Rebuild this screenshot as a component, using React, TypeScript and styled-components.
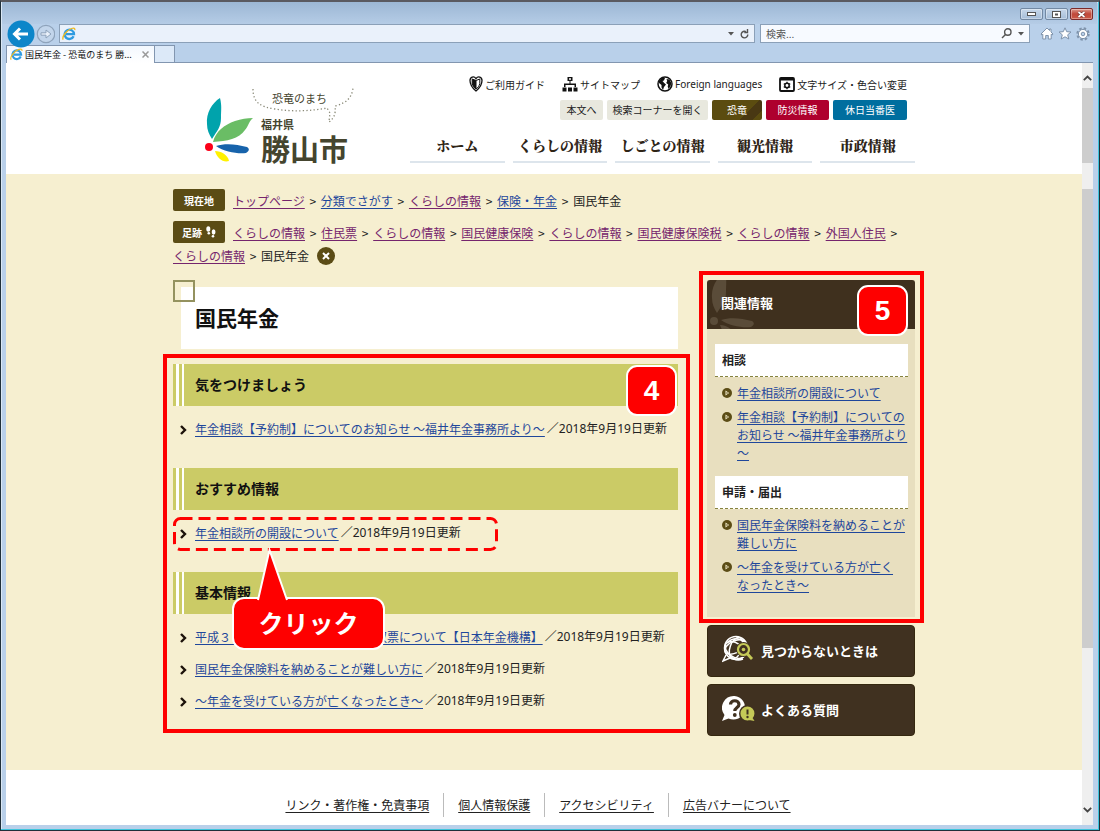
import React from 'react';
import styled, { createGlobalStyle } from 'styled-components';

const GlobalStyle = createGlobalStyle`
  *, *::before, *::after { box-sizing: border-box; }
  body {
    margin: 0;
    font-family: "Noto Sans CJK JP", "Noto Sans", sans-serif;
    font-size: 12px;
    color: #222;
    line-break: strict;
  }
  h1, h2, h3, ul, p { margin: 0; padding: 0; }
  ul { list-style: none; }
  button, input { font: inherit; }
  svg { display: block; flex: none; }
`;

/* ---------- browser window ---------- */

const Window = styled.div`
  display: flex;
  flex-direction: column;
  min-height: 100vh;
  padding: 0 6px 5px 5px;
  background: #b9d0ea;
  border: 1px solid #20303a;
  border-top: 2px solid #5a5a60;
  box-shadow: inset -1px -1px 0 #3fc4dc, inset 1px 1px 0 #dbe8f5;
`;

const TitleBar = styled.div`
  display: flex;
  justify-content: flex-end;
  gap: 2px;
  height: 22px;
  margin: 0 -4px 0 -4px;
  padding: 6px 4px 0;
  background: linear-gradient(#9cb7d4, #b5cce6);
`;

const WindowButton = styled.button<{ $close?: boolean }>`
  display: grid;
  place-items: center;
  width: 23px;
  height: 12px;
  padding: 0;
  border: 1px solid ${p => (p.$close ? '#7c2a2a' : '#7288a2')};
  border-radius: 2px;
  background: ${p => (p.$close ? 'linear-gradient(#dd9a8e, #c0483a 50%, #cc5a48)' : 'linear-gradient(#c8d8ea, #a5bdd8)')};
  box-shadow: inset 0 0 0 1px rgba(255, 255, 255, 0.35);
`;

const AddressRow = styled.div`
  display: flex;
  align-items: center;
  height: 19px;
  gap: 5px;
  padding-right: 3px;
`;

const NavButtons = styled.div`
  position: relative;
  display: flex;
  flex: none;
  align-items: center;
  width: 48px;
  height: 28px;
`;

const PlainButton = styled.button`
  display: grid;
  place-items: center;
  flex: none;
  padding: 0;
  border: 0;
  background: none;
`;

const Field = styled.label<{ $grow?: boolean }>`
  display: flex;
  align-items: center;
  gap: 6px;
  flex: ${p => (p.$grow ? '1 1 0' : '0 0 270px')};
  min-width: 0;
  height: 19px;
  padding: 0 5px 0 ${p => (p.$grow ? '2px' : '5px')};
  border: 1px solid #8ba0b8;
  background: ${p => (p.$grow ? '#eaf1fb' : '#f7faff')};
`;

const FieldInput = styled.input`
  flex: 1;
  min-width: 0;
  height: 15px;
  padding: 0;
  border: 0;
  outline: 0;
  background: none;
  font-size: 10px;
  color: #333;
  &::placeholder { color: #555; opacity: 1; }
`;

const ToolIcons = styled.div`
  display: flex;
  gap: 4px;
  margin-left: 5px;
`;

const TabRow = styled.div`
  display: flex;
  height: 20px;
  padding-top: 2px;
  border-bottom: 1px solid #8296b0;
`;

const Tab = styled.div`
  display: flex;
  align-items: center;
  gap: 2px;
  width: 149px;
  height: 18px;
  padding: 0 5px 0 3px;
  border: 1px solid #8296b0;
  border-width: 1px 1px 0 1px;
  background: linear-gradient(#f3f8fe, #fff);
  font-size: 9px;
  white-space: nowrap;
  color: #111;
`;

const TabTitle = styled.span`
  flex: 1;
`;

const NewTab = styled.button`
  width: 20px;
  height: 17px;
  padding: 0;
  border: 1px solid #8296b0;
  border-left: 0;
  border-bottom: 0;
  background: #dce9f8;
`;

const Viewport = styled.div`
  display: flex;
  flex: 1;
  background: #fff;
`;

const Page = styled.div`
  display: flex;
  flex-direction: column;
  flex: 1;
  min-width: 0;
`;

const ScrollBar = styled.div`
  display: flex;
  flex-direction: column;
  flex: none;
  width: 11px;
  padding-top: 12px;
  background: #efefef;
  align-items: center;
`;

const Thumb = styled.div<{ $h: number; $gap: number }>`
  width: 11px;
  height: ${p => p.$h}px;
  margin-top: ${p => p.$gap}px;
  background: #cdcdcd;
`;

const ScrollEnd = styled.div`
  margin-top: auto;
  margin-bottom: 12px;
`;

/* ---------- site header ---------- */

const Inner = styled.div`
  width: 100%;
  max-width: 742px;
  margin: 0 auto;
`;

const SiteHeader = styled.header`
  background: #fff;
`;

const HeaderInner = styled(Inner)`
  display: flex;
  justify-content: space-between;
  height: 111px;
`;

const Logo = styled.a`
  position: relative;
  display: flex;
  gap: 7px;
  margin: 24px 0 0 31px;
  color: #45452f;
  text-decoration: none;
`;

const LogoText = styled.div`
  display: flex;
  flex-direction: column;
  align-items: flex-start;
  font-weight: 700;
`;

const Bubble = styled.svg`
  position: absolute;
  left: 48px;
  top: 0;
`;

const LogoCatch = styled.span`
  height: 26px;
  margin: 3px 0 0 11px;
  font-size: 11px;
  line-height: 16px;
  font-weight: 400;
`;

const LogoPref = styled.span`
  font-size: 11px;
  line-height: 16px;
`;

const LogoCity = styled.span`
  font-size: 29px;
  line-height: 32px;
`;

const HeaderRight = styled.div`
  display: flex;
  flex-direction: column;
  width: 505px;
  padding-top: 13px;
`;

const QuickLinks = styled.ul`
  display: flex;
  justify-content: flex-end;
  gap: 17px;
  padding-right: 8px;
`;

const QuickLink = styled.a`
  display: flex;
  align-items: center;
  gap: 2px;
  height: 16px;
  font-size: 10px;
  color: #222;
  text-decoration: none;
  white-space: nowrap;
`;

const Latin = styled.span`
  font-family: "Noto Sans", sans-serif;
`;

const ButtonRow = styled.div`
  display: flex;
  justify-content: flex-end;
  gap: 4px;
  margin-top: 8px;
  padding-right: 8px;
`;

const HeaderButton = styled.button<{ $bg?: string; $w: number }>`
  width: ${p => p.$w}px;
  height: 20px;
  padding: 0;
  border: 0;
  border-radius: 2px;
  background: ${p => p.$bg || '#e8e8de'};
  color: ${p => (p.$bg ? '#fff' : '#222')};
  font-size: 10px;
  line-height: 20px;
  white-space: nowrap;
`;

const DinoButton = styled(HeaderButton)`
  background: linear-gradient(135deg, #5b4c10 68%, #493813 68% 86%, #5b4c10 86%);
`;

const GlobalNav = styled.nav`
  display: grid;
  grid-template-columns: repeat(5, 1fr);
  gap: 8px;
  margin-top: 8px;
`;

const NavLink = styled.a`
  height: 35px;
  border-bottom: 2px solid #dde5ec;
  font-family: "Noto Serif CJK JP", "Noto Sans CJK JP", serif;
  font-size: 14px;
  font-weight: 900;
  line-height: 34px;
  text-align: center;
  white-space: nowrap;
  color: #2e2416;
  text-decoration: none;
`;

/* ---------- body ---------- */

const Body = styled.div`
  flex: 1;
  background: #f6efd0;
`;

const Crumbs = styled.nav`
  padding-top: 15px;
`;

const CrumbLine = styled.p`
  line-height: 23px;
  & + & { margin-top: 9px; }
`;

const CrumbTag = styled.span`
  display: inline-flex;
  align-items: center;
  justify-content: center;
  gap: 4px;
  width: 52px;
  height: 22px;
  margin-right: 8px;
  border-radius: 2px;
  background: #5b4c15;
  color: #fff;
  font-size: 10px;
  font-weight: 700;
  vertical-align: top;
`;

const Link = styled.a<{ $visited?: boolean }>`
  color: ${p => (p.$visited ? '#75256d' : '#1f479b')};
  text-decoration: underline;
  text-underline-offset: 2px;
`;

const CrumbLink = styled(Link)`
  white-space: nowrap;
`;

const Sep = styled.span`
  margin: 0 2px;
`;

const ClearButton = styled.button`
  display: inline-grid;
  place-items: center;
  width: 18px;
  height: 18px;
  margin: 3px 0 0 8px;
  padding: 0;
  border: 0;
  border-radius: 50%;
  background: #5b4c15;
  vertical-align: top;
`;

const Columns = styled.div`
  display: grid;
  grid-template-columns: minmax(0, 1fr) 208px;
  gap: 29px;
  margin-top: 13px;
  padding-bottom: 27px;
`;

const TitleBox = styled.div`
  position: relative;
  margin: 7px 0 15px 8px;
  padding: 14px 14px 16px;
  background: #fff;
  &::before {
    content: '';
    position: absolute;
    left: -8px;
    top: -7px;
    width: 22px;
    height: 22px;
    border: 2px solid #94925f;
  }
`;

const Title = styled.h1`
  font-size: 21px;
  line-height: 32px;
  color: #111;
`;

const Marked = styled.div`
  position: relative;
`;

const RedFrame = styled.div`
  position: absolute;
  inset: -10px -12px 0 -10px;
  border: 4px solid #fe0000;
`;

const SideFrame = styled(RedFrame)`
  inset: -9px -9px -6px -8px;
`;

const Badge = styled.span<{ $top: number; $right: number }>`
  position: absolute;
  top: ${p => p.$top}px;
  right: ${p => p.$right}px;
  width: 51px;
  height: 51px;
  border: 2px solid #fff;
  border-radius: 11px;
  background: #fe0000;
  color: #fff;
  font-family: "Liberation Sans", sans-serif;
  font-size: 28px;
  font-weight: 700;
  line-height: 48px;
  text-align: center;
`;

const Sections = styled.div`
  padding-bottom: 17px;
`;

const Section = styled.section`
  & + & { margin-top: 24px; }
`;

const SectionTitle = styled.h2`
  height: 42px;
  padding-left: 22px;
  background: linear-gradient(to right, #cbcb66 3px, #fff 3px 6px, #cbcb66 6px 9px, #fff 9px 11px, #cbcb66 11px);
  font-size: 14px;
  line-height: 40px;
  color: #111;
`;

const ItemList = styled.ul`
  padding-top: 6px;
`;

const Item = styled.li`
  display: flex;
  align-items: center;
  height: 32px;
  padding-left: 7px;
  white-space: nowrap;
  svg { margin: 3px 8px 0 0; }
`;

const ItemDate = styled.span`
  margin-left: 2px;
  font-family: "Noto Sans", "Noto Sans CJK JP", sans-serif;
`;

const DashedMark = styled.svg`
  position: absolute;
  left: 0;
  top: 153px;
`;

const CallOut = styled.div`
  position: absolute;
  left: 59px;
  top: 233px;
  width: 153px;
  height: 53px;
  border: 2px solid #fff;
  border-radius: 12px;
  background: #fe0000;
  color: #fff;
  font-size: 25px;
  font-weight: 700;
  line-height: 46px;
  text-align: center;
`;

const CallOutTip = styled.svg`
  position: absolute;
  left: 22px;
  top: -52px;
`;

/* ---------- sidebar ---------- */

const SideBox = styled.div`
  position: relative;
  margin-bottom: 8px;
  background: #e8dfbf;
`;

const SideHead = styled.h2`
  position: relative;
  height: 49px;
  padding-left: 14px;
  border-radius: 3px 3px 0 0;
  background: #3f301e;
  color: #fff;
  font-size: 13px;
  line-height: 46px;
`;

const HeadLeaf = styled.svg`
  position: absolute;
  left: 2px;
  top: 0;
`;

const HeadText = styled.span`
  position: relative;
`;

const SideBody = styled.div`
  padding: 15px 5px 23px 8px;
`;

const SideTitle = styled.h3`
  height: 33px;
  margin-right: 2px;
  padding-left: 7px;
  border-bottom: 1px dashed #85833f;
  background: #fff;
  font-size: 12px;
  line-height: 31px;
  * + & { margin-top: 14px; }
`;

const SideList = styled.ul`
  display: flex;
  flex-direction: column;
  gap: 6px;
  padding: 7px 0 0 7px;
`;

const SideItem = styled.li`
  display: flex;
  gap: 5px;
  line-height: 18px;
  svg { margin-top: 4px; }
`;

const SideButton = styled.button`
  display: flex;
  align-items: center;
  gap: 6px;
  width: 100%;
  height: 52px;
  margin-bottom: 7px;
  padding: 0 0 2px 14px;
  border: 1px solid #35280f;
  border-radius: 4px;
  background: #403120;
  color: #fff;
  font-size: 13px;
  font-weight: 700;
`;

/* ---------- footer ---------- */

const Footer = styled.footer`
  padding: 23px 0 8px;
  background: #fff;
`;

const FootLinks = styled.ul`
  display: flex;
  justify-content: center;
  padding-right: 12px;
`;

const FootItem = styled.li`
  padding: 0 14px;
  line-height: 24px;
  & + & { border-left: 1px solid #bbb; }
`;

const FootLink = styled.a`
  color: #222;
  text-underline-offset: 2px;
`;

/* ---------- icons ---------- */

const IeIcon = ({ size = 14 }: { size?: number }) => (
  <svg width={size} height={size} viewBox="0 0 14 14" fill="none">
    <path d="M11.6 9.2A4.7 4.7 0 1 1 12 7.2H4" stroke="#2f9be0" strokeWidth="2.3" />
    <path d="M1.2 12.6C-.6 9.6 5 3 9.600 1.500c2.400-.8 3.600-.2 3.200 1.600" stroke="#eebb22" strokeWidth="1.300" />
  </svg>
);

const Caret = () => (
  <svg width="6" height="4" viewBox="0 0 6 4"><path d="M0 0h6L3 3.500z" fill="#555" /></svg>
);

const Chevron = () => (
  <svg width="7" height="10" viewBox="0 0 7 10" fill="none">
    <path d="M1 1l4 4-4 4" stroke="#1c120a" strokeWidth="2.400" />
  </svg>
);

const Dot = () => (
  <svg width="10" height="10" viewBox="0 0 10 10">
    <circle cx="5" cy="5" r="5" fill="#5b4c15" />
    <path d="M3.500 2.600L7.200 5 3.500 7.400z" fill="#f6efd0" />
    <circle cx="5" cy="5" r=".8" fill="#5b4c15" />
  </svg>
);

const GuideIcon = () => (
  <svg width="14" height="16" viewBox="0 0 14 16" fill="none" stroke="#111">
    <path d="M7 2.600C5-.2 1 .8 1 4.500c0 5 3 8 6 10.500 3-2.500 6-5.500 6-10.500C13 .8 9-.2 7 2.600z" strokeWidth="1.300" />
    <path d="M7 4.500L3.200 3v4.500c.5 2.500 2 4.200 3.800 5.500z" fill="#111" />
    <path d="M7 4.500L10.800 3v4.500c-.5 2.500-2 4.200-3.800 5.500" />
  </svg>
);

const SitemapIcon = () => (
  <svg width="16" height="16" viewBox="0 0 16 16" fill="#111">
    <path d="M5.500 1h5v4h-2v2.500H14V11h-1.500V9h-9v2H2V7.500h5.500V5h-2zM7 2.300v1.500h2V2.300z" fillRule="evenodd" />
    <path d="M.5 11.500h4v4h-4zM6 11.500h4v4H6zM11.500 11.500h4v4h-4z" />
  </svg>
);

const GlobeIcon = () => (
  <svg width="16" height="16" viewBox="0 0 16 16">
    <circle cx="8" cy="8" r="7" fill="#fff" stroke="#111" strokeWidth="1.500" />
    <path d="M2 5l2.500-3L8 2 7 4.500 5.500 5l1.700 2L9 8.500 7 11l-1 3-1.500-2.500V9L2 7zM9.500 3l3 .5 1.800 3.500-.8 3.500-2 2.500-.8-2.500.5-2-2-1.500 1-2z" fill="#111" />
  </svg>
);

const DisplayIcon = () => (
  <svg width="16" height="15" viewBox="0 0 16 15" fill="none" stroke="#111">
    <rect x="1" y="1" width="14" height="13" rx="1" strokeWidth="1.800" />
    <path d="M1 2.500h14" strokeWidth="2" />
    <circle cx="8" cy="8.500" r="2.200" strokeWidth="1.500" />
    <path d="M8 4.800v1.200M8 11v1.200M4.800 6.600l1 .6M10.200 9.800l1 .6M11.200 6.600l-1 .6M5.800 9.800l-1 .6" strokeWidth="1.300" />
  </svg>
);

const Leaves = ({ mono }: { mono?: boolean }) => {
  const f = (c: string) => (mono ? '#5a4c39' : c);
  return (
    <>
      <path d="M16 1C8 6 2 16 3 27c0 6 2 10 5 15 5-8 9-12 9-21 0-8 1-12-1-20z" fill={f('#00a3ac')} />
      {!mono && <path d="M9 45C12 34 20 28 31 24c6-2 12-3 18-3-4 3-4 7-8 12-6 9-18 11-32 12z" fill="#6abd65" />}
      <circle cx="5" cy="50" r="4" fill={f('#fb0018')} />
      <path d="M12 49c9-3 20-2 31 1 3 2 2 4-1 6-8 1-22-1-30-7z" fill={f('#1763ab')} />
      <path d="M11 54c6 0 13 4 14 10-6 2-12-3-14-10z" fill={f('#fff100')} />
    </>
  );
};

const Feet = () => (
  <svg width="10" height="12" viewBox="0 0 10 12" fill="#fff">
    <ellipse cx="2.300" cy="3" rx="2" ry="2.800" /><circle cx="2.800" cy="7.200" r="1.300" />
    <ellipse cx="7.600" cy="6" rx="1.900" ry="2.700" /><circle cx="7" cy="10.300" r="1.300" />
  </svg>
);

const LostIcon = () => (
  <svg width="33" height="30" viewBox="0 0 33 30" fill="none">
    <g stroke="#fff" strokeWidth="1.500">
      <circle cx="14" cy="13" r="11.500" />
      <ellipse cx="13" cy="12" rx="11" ry="6" transform="rotate(-25 13 12)" />
      <ellipse cx="14" cy="13" rx="6" ry="11" transform="rotate(20 14 13)" />
      <ellipse cx="13" cy="15" rx="11" ry="7" transform="rotate(35 13 15)" />
      <path d="M4 20L1 26l7-3M5 8c6-6 13-5 17-1M8 21c4 4 8 5 13 3" />
    </g>
    <circle cx="21.500" cy="14.500" r="7.500" fill="#403120" />
    <circle cx="21.500" cy="14.500" r="5.500" stroke="#c5c957" strokeWidth="2.200" />
    <circle cx="21.500" cy="14.500" r="1.800" fill="#c5c957" />
    <path d="M25 18.500l5 5.500" stroke="#c5c957" strokeWidth="2.800" />
  </svg>
);

const FaqIcon = () => (
  <svg width="33" height="28" viewBox="0 0 33 28" fill="none">
    <path d="M12.500 1a11.800 11.800 0 1 1-6 22.500L0 26l2.500-6A11.800 11.800 0 0 1 12.500 1z" fill="#fff" />
    <path d="M8.500 9.500c0-5 8.500-5 8.500 0 0 3-4.200 3-4.200 6.500" stroke="#403120" strokeWidth="3.200" />
    <circle cx="12.800" cy="20" r="1.900" fill="#403120" />
    <circle cx="25.500" cy="18.500" r="8.500" fill="#403120" />
    <path d="M25.500 11.500a7 7 0 1 1-.1 14 7 7 0 0 1 .1-14zM30 22l2.500 4-5.500-1z" fill="#c5c957" />
    <path d="M25.500 14.500v5" stroke="#403120" strokeWidth="2" />
    <circle cx="25.500" cy="22" r="1.200" fill="#403120" />
  </svg>
);

/* ---------- data ---------- */

const trail: [string, boolean][] = [
  ['トップページ', true], ['分類でさがす', false], ['くらしの情報', true], ['保険・年金', false],
];

const footprints: string[] = [
  'くらしの情報', '住民票', 'くらしの情報', '国民健康保険', 'くらしの情報',
  '国民健康保険税', 'くらしの情報', '外国人住民', 'くらしの情報',
];

const sections = [
  { title: '気をつけましょう', items: ['年金相談【予約制】についてのお知らせ ～福井年金事務所より～'] },
  { title: 'おすすめ情報', items: ['年金相談所の開設について'] },
  {
    title: '基本情報',
    items: [
      '平成３０年分の公的年金等源泉徴収票について【日本年金機構】',
      '国民年金保険料を納めることが難しい方に',
      '～年金を受けている方が亡くなったとき～',
    ],
  },
];

const related = [
  { title: '相談', items: ['年金相談所の開設について', '年金相談【予約制】についてのお知らせ ～福井年金事務所より～'] },
  { title: '申請・届出', items: ['国民年金保険料を納めることが難しい方に', '～年金を受けている方が亡くなったとき～'] },
];

export default function App() {
  return (
    <Window lang="ja">
      <GlobalStyle />
      <TitleBar>
        <WindowButton aria-label="最小化">
          <svg width="9" height="4"><rect x=".5" y=".5" width="8" height="3" fill="#fff" stroke="#555" /></svg>
        </WindowButton>
        <WindowButton aria-label="最大化">
          <svg width="9" height="7"><rect x=".5" y=".5" width="8" height="6" fill="#fff" stroke="#555" /><rect x="3" y="2.500" width="3" height="2" fill="#555" /></svg>
        </WindowButton>
        <WindowButton $close aria-label="閉じる">
          <svg width="9" height="7" viewBox="0 0 9 7"><path d="M1.500 1l6 5M7.500 1l-6 5" stroke="#6b3330" strokeWidth="3" /><path d="M1.500 1l6 5M7.500 1l-6 5" stroke="#fff" strokeWidth="1.700" /></svg>
        </WindowButton>
      </TitleBar>

      <AddressRow>
        <NavButtons>
          <PlainButton aria-label="戻る">
            <svg width="29" height="28" viewBox="0 0 29 28">
              <circle cx="15" cy="14" r="13.500" fill="#0d86c9" />
              <path d="M22 14H9M14 8.500L8.500 14l5.500 5.500" fill="none" stroke="#fff" strokeWidth="3" />
            </svg>
          </PlainButton>
          <PlainButton aria-label="進む">
            <svg width="20" height="20" viewBox="0 0 20 20" fill="none" stroke="#8ea3bb">
              <circle cx="11" cy="10" r="8.700" fill="#c2d5eb" strokeWidth="1.200" />
              <path d="M6 8.800h5V6l5 4-5 4v-2.800H6z" fill="#e8f0fa" />
            </svg>
          </PlainButton>
        </NavButtons>
        <Field $grow>
          <IeIcon />
          <FieldInput aria-label="アドレス" />
          <Caret />
          <svg width="9" height="10" viewBox="0 0 9 10" fill="none" stroke="#555" strokeWidth="1.400">
            <path d="M7.800 5.500A3.300 3.300 0 1 1 6 2.600" /><path d="M7.500 0v3.500H4.300" />
          </svg>
        </Field>
        <Field>
          <FieldInput aria-label="検索" placeholder="検索..." />
          <svg width="11" height="11" viewBox="0 0 11 11" fill="none" stroke="#555" strokeWidth="1.400">
            <circle cx="6.800" cy="4" r="3.200" /><path d="M4.500 6.500L1 10" />
          </svg>
          <Caret />
        </Field>
        <ToolIcons>
          <PlainButton aria-label="ホーム">
            <svg width="14" height="13" viewBox="0 0 14 13" fill="#fff" stroke="#7f93ab"><path d="M1 7l6-6 2.500 2.500V2H11v3l2 2-.8 1-1-.8V12H8.300V8.500H5.700V12H2.800V7.200l-1 .8z" /></svg>
          </PlainButton>
          <PlainButton aria-label="お気に入り">
            <svg width="14" height="13" viewBox="0 0 14 13" fill="#fff" stroke="#7f93ab"><path d="M7 .8l1.700 3.900 4.300.3-3.300 2.800 1.100 4.200L7 9.800 3.200 12l1.100-4.200L1 5l4.300-.3z" /></svg>
          </PlainButton>
          <PlainButton aria-label="ツール">
            <svg width="14" height="14" viewBox="0 0 14 14" fill="none">
              <circle cx="7" cy="7" r="5.600" stroke="#7f93ab" strokeWidth="2.200" strokeDasharray="2.400 2" />
              <circle cx="7" cy="7" r="4.600" fill="#fff" stroke="#7f93ab" /><circle cx="7" cy="7" r="1.800" fill="#b9d0ea" stroke="#7f93ab" />
            </svg>
          </PlainButton>
        </ToolIcons>
      </AddressRow>

      <TabRow>
        <Tab>
          <IeIcon size={13} />
          <TabTitle>国民年金 - 恐竜のまち 勝...</TabTitle>
          <PlainButton aria-label="タブを閉じる">
            <svg width="7" height="7" viewBox="0 0 7 7"><path d="M.5.5l6 6M6.500.5l-6 6" stroke="#999" strokeWidth="1.500" /></svg>
          </PlainButton>
        </Tab>
        <NewTab aria-label="新しいタブ" />
      </TabRow>

      <Viewport>
        <Page>
          <SiteHeader>
            <HeaderInner>
              <Logo href="#">
                <svg width="50" height="80" viewBox="0 -10 50 80"><Leaves /></svg>
                <Bubble width="102" height="40" viewBox="0 0 102 40" fill="none">
                  <path d="M1 2c0 14 8 18 22 20 18 3 36 2 52-1l3 5-1 9c5-4 7-8 6-16 12-3 17-9 18-18" stroke="#8a8a78" strokeWidth="1.300" strokeDasharray="1.300 2.300" />
                </Bubble>
                <LogoText>
                  <LogoCatch>恐竜のまち</LogoCatch>
                  <LogoPref>福井県</LogoPref>
                  <LogoCity>勝山市</LogoCity>
                </LogoText>
              </Logo>
              <HeaderRight>
                <QuickLinks>
                  <li><QuickLink href="#"><GuideIcon />ご利用ガイド</QuickLink></li>
                  <li><QuickLink href="#"><SitemapIcon />サイトマップ</QuickLink></li>
                  <li><QuickLink href="#"><GlobeIcon /><Latin>Foreign languages</Latin></QuickLink></li>
                  <li><QuickLink href="#"><DisplayIcon />文字サイズ・色合い変更</QuickLink></li>
                </QuickLinks>
                <ButtonRow>
                  <HeaderButton $w={43}>本文へ</HeaderButton>
                  <HeaderButton $w={101}>検索コーナーを開く</HeaderButton>
                  <DinoButton $w={50} $bg="#5b4c10">恐竜</DinoButton>
                  <HeaderButton $w={63} $bg="#ae002e">防災情報</HeaderButton>
                  <HeaderButton $w={74} $bg="#006e9f">休日当番医</HeaderButton>
                </ButtonRow>
                <GlobalNav>
                  {['ホーム', 'くらしの情報', 'しごとの情報', '観光情報', '市政情報'].map(t => (
                    <NavLink key={t} href="#">{t}</NavLink>
                  ))}
                </GlobalNav>
              </HeaderRight>
            </HeaderInner>
          </SiteHeader>

          <Body>
            <Inner>
              <Crumbs>
                <CrumbLine>
                  <CrumbTag>現在地</CrumbTag>
                  {trail.map(([t, v]) => (
                    <React.Fragment key={t}>
                      <CrumbLink href="#" $visited={v}>{t}</CrumbLink> <Sep>&gt;</Sep>{' '}
                    </React.Fragment>
                  ))}
                  国民年金
                </CrumbLine>
                <CrumbLine>
                  <CrumbTag>足跡<Feet /></CrumbTag>
                  {footprints.map((t, i) => (
                    <React.Fragment key={i}>
                      <CrumbLink href="#" $visited>{t}</CrumbLink> <Sep>&gt;</Sep>{' '}
                    </React.Fragment>
                  ))}
                  国民年金
                  <ClearButton aria-label="足跡を消す">
                    <svg width="8" height="8" viewBox="0 0 8 8"><path d="M1 1l6 6M7 1L1 7" stroke="#fff" strokeWidth="2" /></svg>
                  </ClearButton>
                </CrumbLine>
              </Crumbs>

              <Columns>
                <main>
                  <TitleBox><Title>国民年金</Title></TitleBox>
                  <Marked>
                    <Sections>
                      {sections.map(s => (
                        <Section key={s.title}>
                          <SectionTitle>{s.title}</SectionTitle>
                          <ItemList>
                            {s.items.map(t => (
                              <Item key={t}>
                                <Chevron />
                                <Link href="#">{t}</Link>
                                <ItemDate>／2018年9月19日更新</ItemDate>
                              </Item>
                            ))}
                          </ItemList>
                        </Section>
                      ))}
                    </Sections>
                    <RedFrame />
                    <Badge $top={1} $right={1}>4</Badge>
                    <DashedMark width="325" height="34" viewBox="0 0 325 34">
                      <rect x="1.500" y="1.500" width="322" height="31" rx="6" fill="none" stroke="#fe0000" strokeWidth="3" strokeDasharray="12 6" />
                    </DashedMark>
                    <CallOut>
                      クリック
                      <CallOutTip width="34" height="56" viewBox="0 0 34 56">
                        <path d="M2 54L13.500 3 31 54z" fill="#fe0000" />
                        <path d="M2 53L13.500 3 31 53" fill="none" stroke="#fff" strokeWidth="2" />
                      </CallOutTip>
                    </CallOut>
                  </Marked>
                </main>

                <aside>
                  <SideBox>
                    <SideHead>
                      <HeadLeaf width="50" height="49" viewBox="0 9 50 49"><Leaves mono /></HeadLeaf>
                      <HeadText>関連情報</HeadText>
                    </SideHead>
                    <SideBody>
                      {related.map(g => (
                        <React.Fragment key={g.title}>
                          <SideTitle>{g.title}</SideTitle>
                          <SideList>
                            {g.items.map(t => (
                              <SideItem key={t}><Dot /><Link href="#">{t}</Link></SideItem>
                            ))}
                          </SideList>
                        </React.Fragment>
                      ))}
                    </SideBody>
                    <SideFrame />
                    <Badge $top={5} $right={7}>5</Badge>
                  </SideBox>
                  <SideButton><LostIcon />見つからないときは</SideButton>
                  <SideButton><FaqIcon />よくある質問</SideButton>
                </aside>
              </Columns>
            </Inner>
          </Body>

          <Footer>
            <FootLinks>
              {['リンク・著作権・免責事項', '個人情報保護', 'アクセシビリティ', '広告バナーについて'].map(t => (
                <FootItem key={t}><FootLink href="#">{t}</FootLink></FootItem>
              ))}
            </FootLinks>
          </Footer>
        </Page>
        <ScrollBar>
          <svg width="9" height="6" viewBox="0 0 9 6"><path d="M.8 5.200L4.500 1.500l3.700 3.700" fill="none" stroke="#444" strokeWidth="1.800" /></svg>
          <Thumb $h={75} $gap={7} />
          <Thumb $h={459} $gap={26} />
          <ScrollEnd>
            <svg width="9" height="6" viewBox="0 0 9 6"><path d="M.8.8l3.700 3.700L8.200.8" fill="none" stroke="#444" strokeWidth="1.800" /></svg>
          </ScrollEnd>
        </ScrollBar>
      </Viewport>
    </Window>
  );
}
